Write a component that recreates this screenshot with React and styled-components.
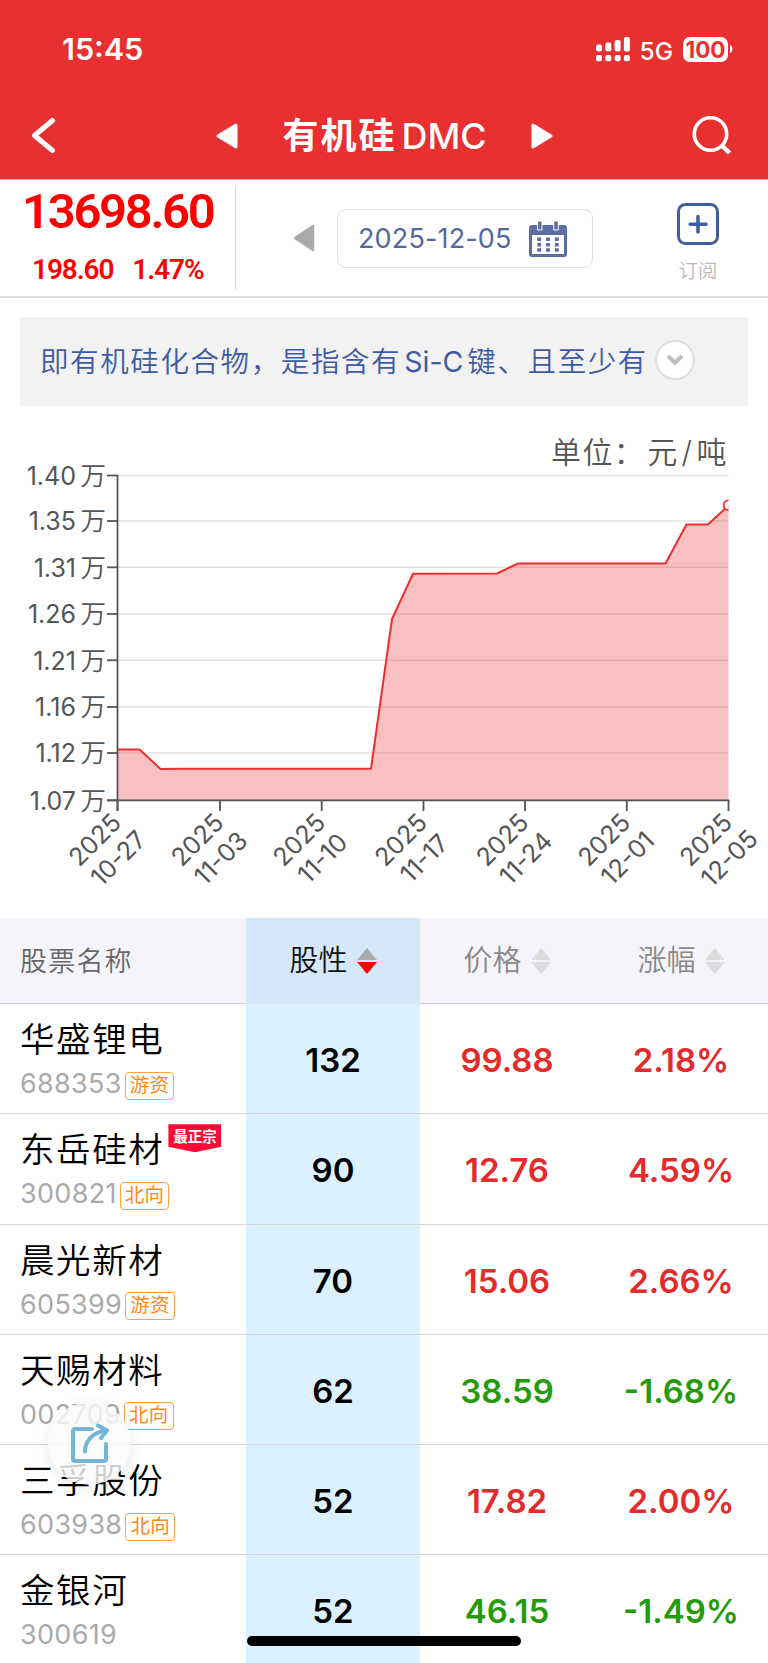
import React from 'react'
import styled, { createGlobalStyle } from 'styled-components'

const stocks = [
  { name: '华盛锂电', code: '688353', tag: '游资', score: 132, price: '99.88', change: '2.18%' },
  { name: '东岳硅材', code: '300821', tag: '北向', score: 90, price: '12.76', change: '4.59%', badge: '最正宗' },
  { name: '晨光新材', code: '605399', tag: '游资', score: 70, price: '15.06', change: '2.66%' },
  { name: '天赐材料', code: '002709', tag: '北向', score: 62, price: '38.59', change: '-1.68%' },
  { name: '三孚股份', code: '603938', tag: '北向', score: 52, price: '17.82', change: '2.00%' },
  { name: '金银河', code: '300619', score: 52, price: '46.15', change: '-1.49%' },
]

const yTicks = [
  { y: 45.5, label: '1.40' },
  { y: 91, label: '1.35' },
  { y: 137.3, label: '1.31' },
  { y: 184, label: '1.26' },
  { y: 230.3, label: '1.21' },
  { y: 277, label: '1.16' },
  { y: 323, label: '1.12' },
  { y: 370.3, label: '1.07' },
]

const xTicks = [
  { x: 117.5, label: '10-27' },
  { x: 220, label: '11-03' },
  { x: 321.7, label: '11-10' },
  { x: 423.5, label: '11-17' },
  { x: 525, label: '11-24' },
  { x: 626.8, label: '12-01' },
  { x: 728.5, label: '12-05' },
]

const line = '118,319.4 139.5,319.4 160.5,339 180,338.8 371,338.8 392,189 413,143.8 497,143.4 518,133.5 665.5,133.5 686.5,94.5 708,94.5 728.5,75.5'

const Chart = () => (
  <ChartSvg viewBox="0 0 768 485">
    <defs>
      <clipPath id="plot">
        <rect x="117" y="0" width="611.5" height="371" />
      </clipPath>
    </defs>
    <UnitText x="551" y="33">单位：<tspan dx="2">元</tspan><tspan dx="3">/</tspan><tspan dx="3">吨</tspan></UnitText>
    {yTicks.map(({ y }) => (
      <line key={y} x1="118" x2="728.5" y1={y} y2={y} stroke="#e0e0e0" strokeWidth="1.4" />
    ))}
    <polygon points={`118,370 ${line} 728.5,370`} fill="rgba(232, 48, 48, 0.3)" />
    <g clipPath="url(#plot)">
      <polyline points={line} fill="none" stroke="#ee2e2e" strokeWidth="2" />
      <circle cx="728.5" cy="75.2" r="4.8" fill="#fff" stroke="#ee2e2e" strokeWidth="1.8" />
    </g>
    <path d="M117.5 44.7V381M107 370.3H729.3" stroke="#555" strokeWidth="1.8" fill="none" />
    {yTicks.map(({ y, label }) => (
      <g key={label}>
        <line x1="107" x2="117.5" y1={y} y2={y} stroke="#555" strokeWidth="1.8" />
        <AxisText x="76" y={y + 9.2} textAnchor="end">{label}</AxisText>
        <AxisUnit x="80.5" y={y + 9.2}>万</AxisUnit>
      </g>
    ))}
    {xTicks.map(({ x, label }) => (
      <g key={label}>
        <line x1={x} x2={x} y1="370" y2="381" stroke="#555" strokeWidth="1.8" />
        <AxisText textAnchor="middle" transform={`translate(${x - 16.5} ${416}) rotate(-45)`}>2025</AxisText>
        <AxisText textAnchor="middle" transform={`translate(${x + 7} ${434.5}) rotate(-45)`}>{label}</AxisText>
      </g>
    ))}
  </ChartSvg>
)

const Sorter = ({ up = '#dcdcdc', down = '#dcdcdc' }) => (
  <svg width="20" height="26" viewBox="0 0 20 26">
    <path d="M10 0L20 12H0Z" fill={up} />
    <path d="M0 14H20L10 26Z" fill={down} />
  </svg>
)

const App = () => (
  <Screen>
    <GlobalStyle />
    <Header>
      <StatusBar>
        <Time>15:45</Time>
        <StatusIcons>
          <svg width="34" height="25" viewBox="0 0 34 25" fill="#fff">
            {[7.5, 5.5, 3, 0].map((top, i) => (
              <g key={top}>
                <rect x={i * 9.3} y={top} width="6" height={14.5 - top} rx="2" />
                <rect x={i * 9.3} y="18" width="6" height="6.3" rx="2" />
              </g>
            ))}
          </svg>
          <Network>5G</Network>
          <Battery>100</Battery>
          <svg width="4" height="8" viewBox="0 0 4 8"><path d="M1 0Q3.5 1 3.5 4T1 8Z" fill="#fff" /></svg>
        </StatusIcons>
      </StatusBar>
      <NavBar>
        <svg width="26" height="38" viewBox="0 0 26 38">
          <path d="M21.5 3.5L3.5 18.5L21.5 33.5" fill="none" stroke="#fff" strokeWidth="5" strokeLinecap="round" strokeLinejoin="round" />
        </svg>
        <TitleGroup>
          <svg width="22" height="26" viewBox="0 0 22 26">
            <path d="M2 13L20 2V24Z" fill="#fff" stroke="#fff" strokeWidth="3" strokeLinejoin="round" />
          </svg>
          <Title>有机硅<TitleLatin>DMC</TitleLatin></Title>
          <svg width="22" height="26" viewBox="0 0 22 26">
            <path d="M20 13L2 2V24Z" fill="#fff" stroke="#fff" strokeWidth="3" strokeLinejoin="round" />
          </svg>
        </TitleGroup>
        <svg width="40" height="40" viewBox="0 0 40 40" fill="none" stroke="#fff">
          <circle cx="18.5" cy="18" r="16.2" strokeWidth="3.6" />
          <path d="M30 29.5L37.5 37" strokeWidth="4.5" />
        </svg>
      </NavBar>
    </Header>

    <QuoteBar>
      <Quote>
        <Price>13698.60</Price>
        <Delta><span>198.60</span><span>1.47%</span></Delta>
      </Quote>
      <DateArea>
        <svg width="22" height="28" viewBox="0 0 22 28">
          <path d="M2 14L20 2V26Z" fill="#aaa" stroke="#aaa" strokeWidth="2.4" strokeLinejoin="round" />
        </svg>
        <DatePicker>
          2025-12-05
          <svg width="38" height="36" viewBox="0 0 38 36">
            <path d="M3 4H35Q38 4 38 7V33Q38 36 35 36H3Q0 36 0 33V7Q0 4 3 4ZM3 14V33H35V14Z" fill="#5b6da1" fillRule="evenodd" />
            <path d="M8.5 0H13V9H8.5ZM24.8 0H29.3V9H24.8Z" fill="#5b6da1" stroke="#fff" strokeWidth="1" />
            <path d="M8.3 18.3H30M8.3 23.8H30M8.3 29H30" stroke="#5b6da1" strokeWidth="3.4" strokeDasharray="3.8 5" />
          </svg>
        </DatePicker>
      </DateArea>
      <Subscribe>
        <svg width="42" height="42" viewBox="0 0 42 42" fill="none" stroke="#3f5fa5">
          <rect x="1.5" y="1.5" width="39" height="39" rx="7" strokeWidth="3" />
          <path d="M21 13.5V29M13.2 21.2H29" strokeWidth="3.6" strokeLinecap="round" />
        </svg>
        订阅
      </Subscribe>
    </QuoteBar>

    <Description>
      <DescText>即有机硅化合物，是指含有<DescLatin>Si-C</DescLatin>键、且至少有</DescText>
      <Expand>
        <svg width="18" height="12" viewBox="0 0 18 12">
          <path d="M2 2L9 8.8L16 2" fill="none" stroke="#bdbdbd" strokeWidth="4" />
        </svg>
      </Expand>
    </Description>

    <Chart />

    <Table>
      <HeadRow>
        <HeadName>股票名称</HeadName>
        <HeadCell $active>股性<Sorter up="#aaa" down="#f00" /></HeadCell>
        <HeadCell>价格<Sorter /></HeadCell>
        <HeadCell>涨幅<Sorter /></HeadCell>
      </HeadRow>
      {stocks.map(({ name, code, tag, score, price, change, badge }) => (
        <Row key={code}>
          <NameCell>
            <Name>
              {name}
              {badge && <Badge>{badge}</Badge>}
            </Name>
            <Code>{code}{tag && <Tag>{tag}</Tag>}</Code>
          </NameCell>
          <Cell $active>{score}</Cell>
          <Cell $down={change.startsWith('-')}>{price}</Cell>
          <Cell $down={change.startsWith('-')}>{change}</Cell>
        </Row>
      ))}
    </Table>

    <ShareButton>
      <svg width="40" height="42" viewBox="0 0 40 42" fill="none" stroke="#76b5d5" strokeWidth="4" strokeLinecap="round" strokeLinejoin="round">
        <path d="M22 6H5Q3 6 3 8V36Q3 38 5 38H34Q36 38 36 36V21" />
        <path d="M15 28.5C15 18 23 9 36 7.5M28 2.5L37 7.5L31 15" />
      </svg>
    </ShareButton>
    <HomeIndicator />
  </Screen>
)

export default App

const GlobalStyle = createGlobalStyle`
  * {
    box-sizing: border-box;
  }

  body {
    margin: 0;
    background: #fff;
    font-family: Inter, 'Noto Sans CJK SC', sans-serif;
  }

  svg {
    display: block;
    flex: none;
  }
`

const Screen = styled.div`
  position: relative;
  width: 768px;
  height: 1663px;
  overflow: hidden;
`

const Header = styled.header`
  height: 180px;
  background: #e83030;
  border-bottom: 1px solid #f4a3a3;
  color: #fff;
`

const StatusBar = styled.div`
  height: 98px;
  padding: 0 35px 0 62px;
  display: flex;
  align-items: center;
  justify-content: space-between;
`

const Time = styled.span`
  font-size: 30.5px;
  font-weight: 600;
  line-height: 36px;
`

const StatusIcons = styled.div`
  display: flex;
  align-items: center;
`

const Network = styled.span`
  margin: 3px 10px 0 10px;
  font-size: 24.5px;
  font-weight: 450;
  line-height: 28px;
`

const Battery = styled.span`
  width: 45px;
  height: 25px;
  margin-right: 1px;
  border-radius: 7px;
  background: #fff;
  color: #e83030;
  font-size: 22.5px;
  font-weight: 700;
  line-height: 26px;
  text-align: center;
`

const NavBar = styled.div`
  height: 76px;
  padding: 0 36px 0 31px;
  display: flex;
  align-items: center;
  justify-content: space-between;
`

const TitleGroup = styled.div`
  margin-left: 19px;
  display: flex;
  align-items: center;
`

const Title = styled.h1`
  width: 204px;
  margin: 0 44px 0 45px;
  font-size: 36px;
  font-weight: 600;
  line-height: 50px;
  letter-spacing: 2px;
  white-space: nowrap;
`

const TitleLatin = styled.span`
  margin-left: 5px;
  font-weight: 550;
  letter-spacing: 0;
`

const DescLatin = styled.span`
  margin: 0 4px 0 3px;
  font-weight: 400;
  letter-spacing: 0;
`

const QuoteBar = styled.section`
  height: 118px;
  padding: 7px 0;
  display: flex;
  border-bottom: 2px solid #ddd;
`

const Quote = styled.div`
  width: 236px;
  height: 102px;
  border-right: 1px solid #d8d8d8;
  color: #f00;
  font-family: Roboto, sans-serif;
  font-weight: 600;
`

const Price = styled.div`
  padding: 1px 0 0 22px;
  font-size: 49px;
  line-height: 48px;
  letter-spacing: -2.3px;
`

const Delta = styled.div`
  padding: 18px 0 0 32px;
  display: flex;
  gap: 19px;
  font-size: 28px;
  line-height: 31px;
  letter-spacing: -1.1px;
`

const DateArea = styled.div`
  width: 357px;
  padding: 22px 0 0 57px;
  display: flex;
  align-items: flex-start;
  gap: 22px;

  > svg {
    margin-top: 15px;
  }
`

const DatePicker = styled.div`
  width: 256px;
  height: 59px;
  padding: 0 25px 0 20px;
  display: flex;
  align-items: center;
  justify-content: space-between;
  border: 1px solid #e2e2e2;
  border-radius: 9px;
  color: #5468a0;
  font-size: 27px;
  letter-spacing: 0.15px;
`

const Subscribe = styled.div`
  width: 84px;
  margin-left: 63px;
  padding-top: 16px;
  display: flex;
  flex-direction: column;
  align-items: center;
  gap: 11px;
  color: #bbb;
  font-size: 19.5px;
  font-weight: 350;
  line-height: 30px;
`

const Description = styled.section`
  height: 89px;
  margin: 19px 20px 0;
  padding: 0 20px;
  display: flex;
  align-items: center;
  background: #f2f2f2;
`

const DescText = styled.div`
  width: 608px;
  margin-top: -4px;
  color: #3d5ba5;
  font-size: 28.5px;
  font-weight: 350;
  letter-spacing: 1.6px;
  white-space: nowrap;
`

const Expand = styled.span`
  width: 40px;
  height: 40px;
  margin: -3px 0 0 7px;
  display: flex;
  align-items: center;
  justify-content: center;
  border: 2px solid #ddd;
  border-radius: 50%;
  background: #fff;
`

const ChartSvg = styled.svg`
  width: 768px;
  height: 485px;
  margin-top: 24px;
`

const AxisText = styled.text`
  fill: #555;
  font-size: 25px;
  font-weight: 400;
`

const AxisUnit = styled(AxisText)`
  font-size: 25.5px;
  font-weight: 350;
`

const UnitText = styled.text`
  fill: #555;
  font-size: 30px;
  font-weight: 350;
  letter-spacing: 1.4px;
`

const Table = styled.section`
  margin-top: 3px;
`

const HeadRow = styled.div`
  height: 86px;
  display: grid;
  grid-template-columns: 246px repeat(3, 174px);
  background: #f4f4fa;
  border-bottom: 1px solid #d3d3d3;
`

const HeadName = styled.div`
  padding: 1px 0 0 20px;
  color: #666;
  font-size: 27px;
  font-weight: 350;
  line-height: 85px;
  letter-spacing: 1.2px;
`

const HeadCell = styled.div`
  display: flex;
  align-items: center;
  justify-content: center;
  gap: 9px;
  background: ${({ $active }) => ($active ? '#d5e8fa' : 'transparent')};
  color: ${({ $active }) => ($active ? '#111' : '#888')};
  font-size: 29px;
  font-weight: 350;
  line-height: 42px;
`

const Row = styled.div`
  height: 110.25px;
  display: grid;
  grid-template-columns: 246px repeat(3, 174px);
  border-bottom: 1px solid #d6d6d6;
`

const NameCell = styled.div`
  padding: 13px 0 0 20px;
`

const Name = styled.div`
  display: flex;
  align-items: flex-start;
  color: #000;
  font-size: 34.5px;
  font-weight: 350;
  line-height: 45px;
  letter-spacing: 1.6px;
`

const Badge = styled.span`
  width: 53px;
  height: 28px;
  margin: -3px 0 0 4px;
  background: #ff0a35;
  clip-path: polygon(0 0, 100% 0, 100% 80%, 50% 100%, 0 80%);
  color: #fff;
  font-size: 14.5px;
  font-weight: 700;
  line-height: 25px;
  letter-spacing: 0;
  text-align: center;
`

const Code = styled.div`
  margin-top: 4px;
  display: flex;
  align-items: center;
  color: #aaa;
  font-size: 27px;
  font-weight: 400;
  line-height: 35px;
  letter-spacing: 0.3px;
`

const Tag = styled.span`
  height: 28px;
  margin: 4px 0 0 3px;
  padding: 0 4px;
  border: 1.5px solid #ffa14a;
  border-radius: 4px;
  color: #ff8718;
  font-size: 19.5px;
  line-height: 25px;
`

const Cell = styled.div`
  display: flex;
  align-items: center;
  justify-content: center;
  padding-top: 3px;
  background: ${({ $active }) => ($active ? '#dcf1ff' : 'transparent')};
  color: ${({ $active, $down }) => ($active ? '#000' : $down ? '#259b0c' : '#e32b2b')};
  font-size: 33px;
  font-weight: 600;
`

const ShareButton = styled.button`
  position: absolute;
  left: 48px;
  top: 1402px;
  width: 83px;
  height: 83px;
  padding: 0;
  display: flex;
  align-items: center;
  justify-content: center;
  border: none;
  border-radius: 50%;
  background: rgba(250, 250, 250, 0.82);
  box-shadow: 0 3px 14px rgba(0, 0, 0, 0.1);
`

const HomeIndicator = styled.div`
  position: absolute;
  left: 247px;
  bottom: 17px;
  width: 274px;
  height: 10px;
  border-radius: 5px;
  background: #000;
`
